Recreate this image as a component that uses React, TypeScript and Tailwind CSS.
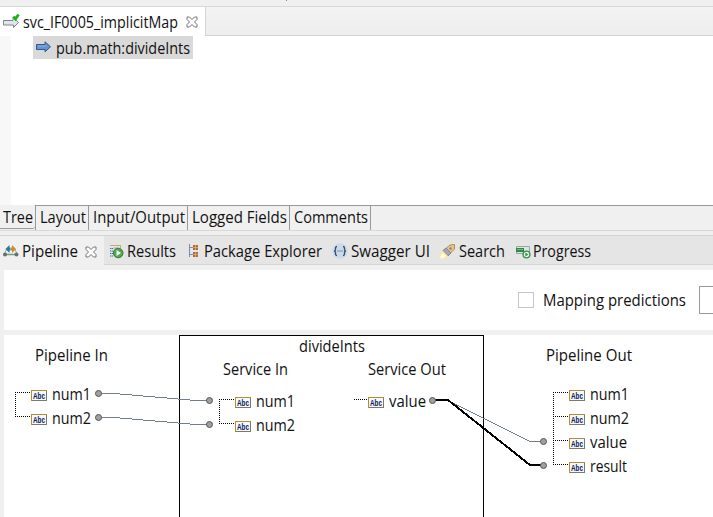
import { useLayoutEffect, useRef, type ReactNode } from "react";

/** A label condensed horizontally to the width of its box. */
function Label({ children, className = "" }: { children: ReactNode; className?: string }) {
  const box = useRef<HTMLSpanElement>(null);
  const text = useRef<HTMLSpanElement>(null);
  useLayoutEffect(() => {
    if (!box.current || !text.current) return;
    const scale = box.current.offsetWidth / text.current.getBoundingClientRect().width;
    text.current.style.transform = `scaleX(${scale})`;
  }, []);
  return (
    <span ref={box} className={`block h-5 shrink-0 leading-5 whitespace-nowrap ${className}`}>
      <span ref={text} className="inline-block origin-left">
        {children}
      </span>
    </span>
  );
}

function CloseIcon({ className = "" }: { className?: string }) {
  return (
    <svg className={`shrink-0 ${className}`} width="12" height="12" viewBox="0 0 12 12" fill="#fafafa" stroke="#777" strokeWidth="1">
      <path d="M1 1H3.500L6 3.500 8.500 1H11V3.500L8.500 6 11 8.500V11H8.500L6 8.500 3.500 11H1V8.500L3.500 6 1 3.500Z" />
    </svg>
  );
}

function FlowIcon() {
  return (
    <svg width="18" height="16" viewBox="0 0 18 16" className="shrink-0">
      <path d="M.5 7.500H10V4.500L15.500 9.500 10.500 14.500V12H.5Z" fill="#dfe7ed" stroke="#788791" />
      <path d="M10.500 3.500L12.500 6 15.500 1.500" fill="none" stroke="#12b512" strokeWidth="2.700" />
    </svg>
  );
}

function ArrowIcon() {
  return (
    <svg width="16" height="12" viewBox="0 0 16 12" className="shrink-0">
      <path d="M.5 3.500H9V.8L14.500 5.800 9 10.800V8.500H.5Z" fill="#6594ce" stroke="#32568e" />
      <path d="M2 5H10.500" stroke="#8db1dc" />
    </svg>
  );
}

function PipelineIcon() {
  return (
    <svg width="18" height="14" viewBox="0 0 18 14" className="shrink-0">
      <path d="M3 9L4.500 5M14.500 9L13 5" stroke="#9aa8a4" fill="none" />
      <path d="M3.500 5L7.500 1V3.500H8.500V6.500H7.500V9Z" fill="#217ca6" />
      <path d="M14 5L10 1V3.500H9V6.500H10V9Z" fill="#d38b21" />
      <path d="M3 10.500H15" stroke="#70a07c" strokeWidth="1.500" />
      <circle cx="3" cy="10.500" r="2" fill="#647069" />
      <circle cx="14.500" cy="10.500" r="2" fill="#647069" />
    </svg>
  );
}

function ResultsIcon() {
  return (
    <svg width="16" height="16" viewBox="0 0 16 16" className="shrink-0">
      <path d="M1 1.500H11M11.500 1V4" stroke="#c5ad66" fill="none" />
      <path d="M1 4.500H4M1 7H4M1 9.500H4M1 12H4" stroke="#3a6ca5" strokeDasharray="1.500 .5" />
      <path d="M4.500 4H9" stroke="#9aacbd" />
      <circle cx="9.200" cy="9" r="4.800" fill="#50a84b" stroke="#367c36" />
      <path d="M7.500 6L12 9 7.500 12Z" fill="#fff" />
    </svg>
  );
}

function PackageIcon() {
  return (
    <svg width="12" height="14" viewBox="0 0 12 14" className="shrink-0">
      <path d="M1.500 0V13M1.500 3.500H5M1.500 10.500H5" stroke="#7590ac" fill="none" />
      <path d="M5 1H10V6H5ZM5 8H10V13H5Z" fill="#b36b39" />
      <path d="M7.500 1V6M5 3.500H10M7.500 8V13M5 10.500H10" stroke="#efbc91" strokeWidth=".6" />
    </svg>
  );
}

function SwaggerIcon() {
  return (
    <svg width="16" height="16" viewBox="0 0 16 16" className="shrink-0">
      <circle cx="8" cy="8" r="7.700" fill="#ccd9e7" />
      <path d="M5 3.500Q3.500 3.500 3.500 5V6.500Q3.500 8 2 8 3.500 8 3.500 9.500V11Q3.500 12.500 5 12.500M11 3.500Q12.500 3.500 12.500 5V6.500Q12.500 8 14 8 12.500 8 12.500 9.500V11Q12.500 12.500 11 12.500" fill="none" stroke="#304d79" strokeWidth="1.300" />
      <path d="M5.500 8H6.500M7.500 8H8.500M9.500 8H10.500" stroke="#304d79" />
    </svg>
  );
}

function SearchIcon() {
  return (
    <svg width="17" height="16" viewBox="0 0 17 16" className="shrink-0">
      <path d="M5 6L11 1 15.500 .5 15.500 5 9.500 11Z" fill="#f0c47b" stroke="#b18b5c" />
      <path d="M4 6.500L7 4 12 9 9 12Z" fill="#a4a7b2" stroke="#828692" />
      <path d="M4 7L9 12Q7 15 3 15.500L.5 14Q.5 9 4 7Z" fill="#ffe59a" />
      <path d="M4 9L7 12 3 15 1 13Z" fill="#fffbe5" />
      <circle cx="11.500" cy="4.500" r="1.200" fill="#6485ae" />
    </svg>
  );
}

function ProgressIcon() {
  return (
    <svg width="15" height="13" viewBox="0 0 15 13" className="shrink-0">
      <path d="M.5 .5H13.500V7.500H.5Z" fill="#d5e5e8" stroke="#94a5a4" />
      <path d="M0 2H8V6H0Z" fill="#398348" />
      <path d="M1 3H7V4H1Z" fill="#79bc66" />
      <circle cx="10.500" cy="8.500" r="3.400" fill="#e9f7e7" stroke="#399247" strokeWidth="1.400" />
      <path d="M9.300 6.500L12.500 8.500 9.300 10.500Z" fill="#389349" />
    </svg>
  );
}

function StringIcon() {
  return (
    <svg width="16" height="11" viewBox="0 0 16 11" className="shrink-0 overflow-visible">
      <path d="M0 0H16V11H0Z" fill="#7f7961" />
      <path d="M0 0H16V1H1V11H0Z" fill="#b68c2c" />
      <path d="M1 1H15V10H1Z" fill="#f3f7ff" />
      <text x="2" y="9" fontSize="9" fontWeight="700" fontFamily="'Liberation Sans', sans-serif" textLength="12" lengthAdjust="spacingAndGlyphs" fill="#07164e">
        Abc
      </text>
    </svg>
  );
}

function Field({ name, place, width }: { name: string; place: string; width: string }) {
  return (
    <div className={`absolute flex items-start ${place}`}>
      <div className="pt-[6px]">
        <StringIcon />
      </div>
      <Label className={`ml-[5px] ${width}`}>{name}</Label>
    </div>
  );
}

const ports = [
  [98, 58],
  [98, 82],
  [209, 65],
  [209, 89],
  [432, 65],
  [543, 106],
  [543, 130],
];

function Wires() {
  return (
    <svg className="absolute inset-0" width="713" height="182" viewBox="0 0 713 182" fill="none">
      <g stroke="#000" strokeDasharray="1 1" shapeRendering="crispEdges">
        <path d="M15 57.500H31M15 81.500H31M15.500 57V82" />
        <path d="M219 64.500H235M219 88.500H235M219.500 64V89" />
        <path d="M354 64.500H368" />
        <path d="M553 57.500H569M553 81.500H569M553 105.500H569M553 129.500H569M553.500 57V130" />
      </g>
      <g stroke="#717d88" shapeRendering="crispEdges">
        <path d="M98 58.500H114L196 65.500H209" />
        <path d="M98 82.500H114L196 89.500H209" />
        <path d="M448 65.500L530 106.500H543" />
      </g>
      <path d="M432 65H448L530 130H543" stroke="#000" strokeWidth="2" shapeRendering="crispEdges" />
      {ports.map(([x, y]) => (
        <circle key={`${x}-${y}`} cx={x + 0.5} cy={y + 0.5} r="3" fill="#a0a0a0" stroke="#555" />
      ))}
    </svg>
  );
}

function EditorPane() {
  return (
    <>
      <div className="flex h-[7px] items-start border-b border-[#d8d8d8] bg-[#f0f0f0]">
        <div className="ml-[286px] h-px w-px bg-[#888]" />
      </div>
      <div className="flex h-[29px]">
        <div className="flex w-[205px] items-start bg-white pl-[3px]">
          <div className="mt-[6px] w-[20px]">
            <FlowIcon />
          </div>
          <Label className="mt-[5px] w-[155px]">svc_IF0005_implicitMap</Label>
          <CloseIcon className="mt-[9px] ml-[8px]" />
        </div>
        <div className="flex-1 border-b border-l border-[#d4d4d4] bg-gradient-to-b from-[#f3f3f3] to-[#eeeeee]" />
      </div>
      <div className="flex h-[169px] bg-white">
        <div className="w-[11px] bg-[#f8f8f8]" />
        <div className="ml-[22px] flex h-[23px] w-[160px] items-start bg-[#d9d9d9] pl-[3px]">
          <div className="mt-[5px]">
            <ArrowIcon />
          </div>
          <Label className="mt-[2px] ml-[4px] w-[134px]">pub.math:divideInts</Label>
        </div>
      </div>
      <div className="flex h-[26px] border-b border-[#d8d8d8]">
        <div className="h-[24px] w-[35px] rounded-br-[3px] border-b border-[#999] pl-[3px] pt-[2px]">
          <Label className="w-[30px]">Tree</Label>
        </div>
        <div className="flex flex-1 border-t border-l border-[#999]">
          <div className="w-[53px] border-r border-[#999] pt-px pl-[4px]">
            <Label className="w-[46px]">Layout</Label>
          </div>
          <div className="w-[99px] border-r border-[#999] pt-px pl-[4px]">
            <Label className="w-[92px]">Input/Output</Label>
          </div>
          <div className="w-[102px] border-r border-[#999] pt-px pl-[4px]">
            <Label className="w-[95px]">Logged Fields</Label>
          </div>
          <div className="w-[81px] border-r border-[#999] pt-px pl-[4px]">
            <Label className="w-[74px]">Comments</Label>
          </div>
        </div>
      </div>
    </>
  );
}

function ViewTabs() {
  return (
    <div className="mt-[4px] flex h-[30px] border-y border-[#d4d4d4] bg-[#e5e5e5]">
      <div className="-mb-px flex w-[104px] items-start bg-[#f0f0f0] pl-[2px]">
        <div className="mt-[8px]">
          <PipelineIcon />
        </div>
        <Label className="mt-[5px] ml-[2px] w-[56px]">Pipeline</Label>
        <CloseIcon className="mt-[10px] ml-[7px]" />
      </div>
      <div className="flex items-start pl-[5px]">
        <div className="mt-[8px]">
          <ResultsIcon />
        </div>
        <Label className="mt-[5px] ml-[2px] w-[49px]">Results</Label>
        <div className="mt-[8px] ml-[12px]">
          <PackageIcon />
        </div>
        <Label className="mt-[5px] ml-[4px] w-[118px]">Package Explorer</Label>
        <div className="mt-[7px] ml-[10px]">
          <SwaggerIcon />
        </div>
        <Label className="mt-[5px] ml-[3px] w-[79px]">Swagger UI</Label>
        <div className="mt-[8px] ml-[9px]">
          <SearchIcon />
        </div>
        <Label className="mt-[5px] ml-[3px] w-[46px]">Search</Label>
        <div className="mt-[10px] ml-[11px]">
          <ProgressIcon />
        </div>
        <Label className="mt-[5px] ml-[2px] w-[58px]">Progress</Label>
      </div>
    </div>
  );
}

function PipelineCanvas() {
  return (
    <div className="relative mt-[5px] h-[182px] overflow-hidden">
      <div className="ml-[4px] h-full bg-white" />
      <div className="absolute top-0 left-[179px] h-[190px] w-[305px] border border-black" />
      <Label className="absolute top-[10px] left-[35px] w-[73px]">Pipeline In</Label>
      <Label className="absolute top-[1px] left-[299px] w-[66px]">divideInts</Label>
      <Label className="absolute top-[24px] left-[223px] w-[65px]">Service In</Label>
      <Label className="absolute top-[24px] left-[368px] w-[78px]">Service Out</Label>
      <Label className="absolute top-[10px] left-[546px] w-[86px]">Pipeline Out</Label>
      <Wires />
      <Field name="num1" place="top-[49px] left-[31px]" width="w-[39px]" />
      <Field name="num2" place="top-[73px] left-[31px]" width="w-[39px]" />
      <Field name="num1" place="top-[56px] left-[235px]" width="w-[39px]" />
      <Field name="num2" place="top-[80px] left-[235px]" width="w-[39px]" />
      <Field name="value" place="top-[56px] left-[368px]" width="w-[37px]" />
      <Field name="num1" place="top-[49px] left-[569px]" width="w-[39px]" />
      <Field name="num2" place="top-[73px] left-[569px]" width="w-[39px]" />
      <Field name="value" place="top-[97px] left-[569px]" width="w-[37px]" />
      <Field name="result" place="top-[121px] left-[569px]" width="w-[37px]" />
    </div>
  );
}

export default function App() {
  return (
    <div className="h-[517px] w-[713px] overflow-hidden bg-[#f0f0f0] font-['Open_Sans','Noto_Sans',sans-serif] text-[15.5px] text-[#111]">
      <EditorPane />
      <ViewTabs />
      <div className="mt-[5px] ml-[4px] flex h-[60px] items-start bg-white">
        <div className="mt-[22px] ml-[514px] size-[16px] border border-[#c5c5c5]" />
        <Label className="mt-[20px] ml-[9px] w-[143px]">Mapping predictions</Label>
        <div className="mt-[16px] ml-[13px] h-[28px] flex-1 border border-r-0 border-[#999]" />
      </div>
      <PipelineCanvas />
    </div>
  );
}
